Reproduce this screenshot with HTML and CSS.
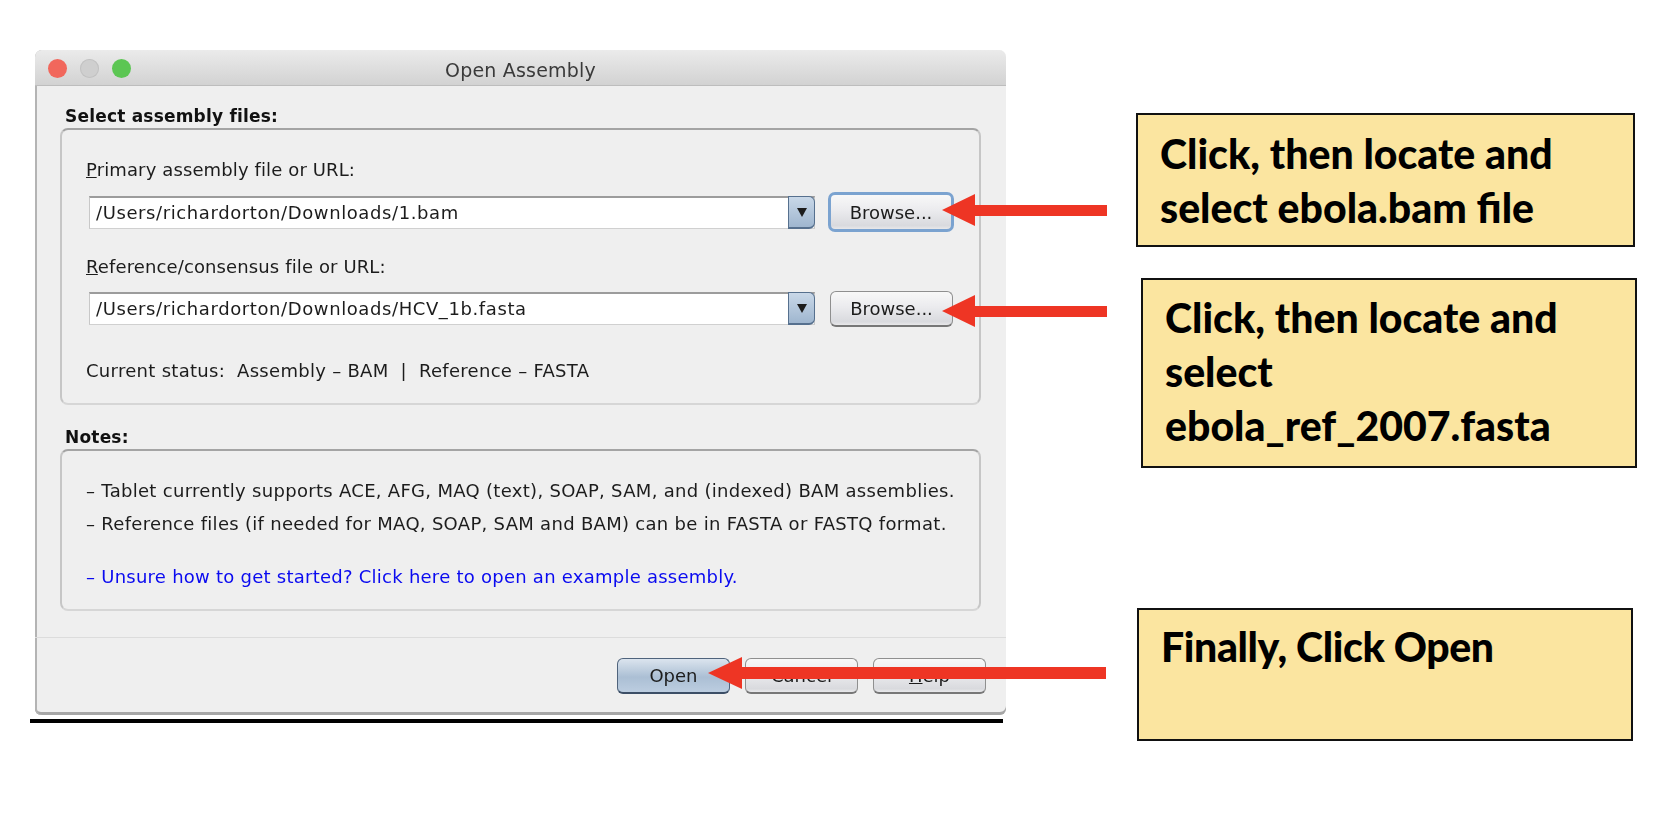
FILE: index.html
```html
<!DOCTYPE html>
<html lang="en">
<head>
    <meta charset="UTF-8">
    <meta name="viewport" content="width=device-width, initial-scale=1.0">
    <title>Open Assembly</title>
    <link rel="stylesheet" href="styles.css">
</head>
<body>
    <div class="canvas">
        <div class="dialog">
            <div class="titlebar">
                <div class="lights">
                    <span class="light red"></span>
                    <span class="light grey"></span>
                    <span class="light green"></span>
                </div>
                <span class="dialog-title">Open Assembly</span>
            </div>

            <div class="dialog-body">
                <h2 class="group-title">Select assembly files:</h2>
                <div class="panel files">
                    <label class="field-label"><u>P</u>rimary assembly file or URL:</label>
                    <div class="file-row first">
                        <div class="combo">
                            <span class="combo-value">/Users/richardorton/Downloads/1.bam</span>
                            <span class="combo-btn"></span>
                        </div>
                        <button class="btn browse focused">Browse...</button>
                    </div>

                    <label class="field-label second"><u>R</u>eference/consensus file or URL:</label>
                    <div class="file-row">
                        <div class="combo">
                            <span class="combo-value">/Users/richardorton/Downloads/HCV_1b.fasta</span>
                            <span class="combo-btn"></span>
                        </div>
                        <button class="btn browse">Browse...</button>
                    </div>

                    <p class="status">Current status:&nbsp; Assembly – BAM &nbsp;|&nbsp; Reference – FASTA</p>
                </div>

                <h2 class="group-title notes-title">Notes:</h2>
                <div class="panel notes">
                    <p class="note">– Tablet currently supports ACE, AFG, MAQ (text), SOAP, SAM, and (indexed) BAM assemblies.</p>
                    <p class="note">– Reference files (if needed for MAQ, SOAP, SAM and BAM) can be in FASTA or FASTQ format.</p>
                    <p class="note link">– Unsure how to get started? Click here to open an example assembly.</p>
                </div>
            </div>

            <div class="dialog-footer">
                <button class="btn action default">Open</button>
                <button class="btn action">Cancel</button>
                <button class="btn action"><u>H</u>elp</button>
            </div>
        </div>

        <div class="dialog-rule"></div>

        <div class="callout callout-bam">Click, then locate and<br>select ebola.bam file</div>
        <div class="callout callout-fasta">Click, then locate and<br>select<br>ebola_ref_2007.fasta</div>
        <div class="callout callout-open">Finally, Click Open</div>

        <svg class="arrows" width="1676" height="832" viewBox="0 0 1676 832">
            <polygon points="942,210 975,194 975,205 1107,205 1107,216 975,216 975,226"/>
            <polygon points="942,311 975,295 975,306 1107,306 1107,317 975,317 975,327"/>
            <polygon points="708,673 742,657 742,667 1106,667 1106,679 742,679 742,689"/>
        </svg>
    </div>
</body>
</html>
```

FILE: styles.css
```css
html, body {
 margin: 0;
 background-color: #fff;
}

.canvas {
 position: relative;
 width: 1676px;
 height: 832px;
 overflow: hidden;
 font-family: "DejaVu Sans", sans-serif;
}

/* dialog window */
.dialog {
 position: absolute;
 left: 35px;
 top: 50px;
 width: 971px;
 height: 665px;
 box-sizing: border-box;
 display: flex;
 flex-direction: column;
 border-radius: 7px 7px 6px 6px;
 background-color: #efefef;
 box-shadow: inset 2px 0 0 #b4b4b4, inset 0 -3px 0 #a6a6a6;
 overflow: hidden;
 color: #1c1c1c;
 filter: blur(0.4px); /* the screenshot is a bit soft */
}

.dialog-rule {
 position: absolute;
 left: 30px;
 top: 719px;
 width: 973px;
 height: 4px;
 background-color: #000;
}

.titlebar {
 position: relative;
 flex: none;
 height: 36px;
 box-sizing: border-box;
 padding-top: 5px;
 display: flex;
 align-items: center;
 justify-content: center;
 background: linear-gradient(#ebebeb, #d2d2d2);
 border-bottom: 1px solid #bdbdbd;
}

.lights {
 position: absolute;
 left: 13px;
 top: 9px;
 display: flex;
 gap: 13px;
}

.light {
 width: 19px;
 height: 19px;
 border-radius: 50%;
}

.light.red { background-color: #f1675c; }
.light.grey { background-color: #cfcfcf; box-shadow: inset 0 0 0 1px #c2c2c2; }
.light.green { background-color: #5cc653; }

.dialog-title {
 font-size: 19px;
 letter-spacing: 0.2px;
 color: #3a3a3a;
}

.dialog-body {
 flex: none;
 height: 552px;
 box-sizing: border-box;
 padding: 18px 25px 0;
 border-bottom: 1px solid #dcdcdc;
}

.group-title {
 margin: 0;
 font-size: 17px;
 letter-spacing: 0.2px;
 line-height: 24px;
 font-weight: bold;
 padding-left: 5px;
 color: #111;
}

.notes-title {
 margin-top: 20px;
}

.panel {
 box-sizing: border-box;
 border: 2px solid #c6c6c6;
 border-top-color: #a4a4a4;
 border-bottom-color: #d6d6d6;
 border-radius: 8px;
 padding: 28px 0 0 24px;
}

.panel.files {
 height: 277px;
}

.panel.notes {
 height: 162px;
}

.field-label {
 display: block;
 font-size: 18px;
 letter-spacing: 0.12px;
 line-height: 24px;
}

.field-label.second {
 margin-top: 23px;
}

.file-row {
 display: flex;
 align-items: center;
 height: 39px;
 margin-top: 10px;
 padding-left: 3px;
}

.file-row.first {
 height: 40px;
}

.combo {
 width: 726px;
 height: 33px;
 box-sizing: border-box;
 display: flex;
 background-color: #fff;
 border: 1px solid #c8c8c8;
 border-top: 2px solid #9c9c9c;
 border-bottom-color: #d0d0d0;
}

.combo-value {
 flex: 1;
 padding-left: 6px;
 font-size: 18px;
 letter-spacing: 0.6px;
 line-height: 30px;
}

.combo-btn {
 position: relative;
 width: 27px;
 margin: -2px -1px -1px 0;
 box-sizing: border-box;
 background: linear-gradient(#c9d8e8, #9fb6cf);
 border: 1px solid #56708e;
 border-bottom-width: 2px;
 border-radius: 0 6px 6px 0;
}

.combo-btn::after {
 content: "";
 position: absolute;
 left: 8px;
 top: 11px;
 border-left: 5px solid transparent;
 border-right: 5px solid transparent;
 border-top: 9px solid #1c1c1c;
}

.btn {
 box-sizing: border-box;
 padding: 0;
 font-family: "DejaVu Sans", sans-serif;
 font-size: 18px;
 color: #1c1c1c;
 background: linear-gradient(#f8f8f8, #ebebee 45%, #d9dade 90%, #e8e8ea);
 border: 1px solid #8f8f8f;
 border-bottom: 2px solid #777;
 border-radius: 6px;
}

.btn.browse {
 width: 123px;
 height: 36px;
 margin-left: 15px;
}

.btn.browse.focused {
 height: 40px;
 width: 126px;
 margin-left: 13px;
 border: 3px solid #7ba3d0;
 border-radius: 7px;
}

.status {
 margin: 31px 0 0;
 font-size: 18px;
 letter-spacing: 0.29px;
 line-height: 24px;
}

.note {
 margin: 9px 0 0;
 font-size: 18px;
 letter-spacing: 0.3px;
 line-height: 24px;
 white-space: nowrap;
}

.note:first-child {
 margin-top: 0;
}

.note.link {
 margin-top: 29px;
 letter-spacing: 0.25px;
 color: #0a0af0;
}

.dialog-footer {
 flex: 1;
 display: flex;
 justify-content: flex-end;
 gap: 15px;
 padding: 20px 20px 0 0;
}

.btn.action {
 width: 113px;
 height: 36px;
}

.btn.default {
 background: linear-gradient(#dbe4ee, #abbfd4 55%, #bccde0);
 border-color: #4f637c;
 border-bottom-color: #3c4e66;
}

/* yellow notes on the right */
.callout {
 position: absolute;
 box-sizing: border-box;
 padding-left: 22px;
 background-color: #fbe5a0;
 border: 2px solid #111;
 font-family: Lato, sans-serif;
 font-size: 41px;
 font-weight: 900;
 line-height: 54px;
 color: #000;
}

.callout-bam {
 left: 1136px;
 top: 113px;
 width: 499px;
 height: 134px;
 padding-top: 12px;
}

.callout-fasta {
 left: 1141px;
 top: 278px;
 width: 496px;
 height: 190px;
 padding-top: 11px;
}

.callout-open {
 left: 1137px;
 top: 608px;
 width: 496px;
 height: 133px;
 padding-top: 10px;
 letter-spacing: -0.4px;
}

.arrows {
 position: absolute;
 left: 0;
 top: 0;
 fill: #ee3524;
}
```
